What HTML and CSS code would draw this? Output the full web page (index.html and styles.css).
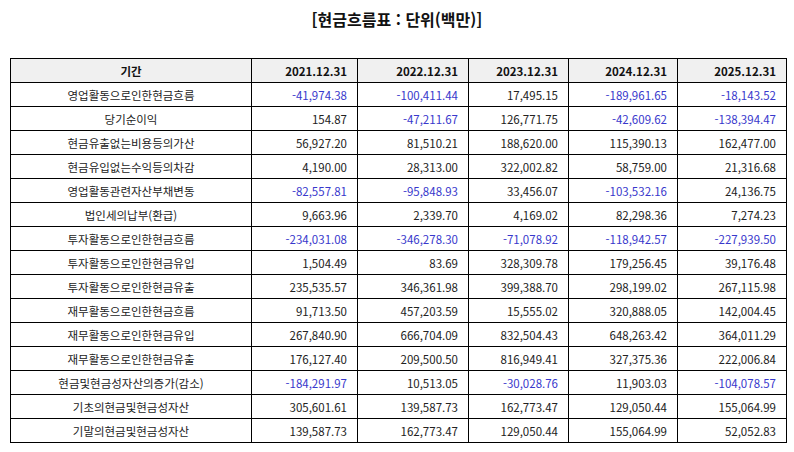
FILE: index.html
```html
<!DOCTYPE html>
<html lang="ko">
<head>
<meta charset="utf-8">
<title>현금흐름표</title>
<link rel="stylesheet" href="styles.css">
</head>
<body>
<h1 class="title">[현금흐름표 : 단위(백만)]</h1>
<table class="cf">
<colgroup>
<col class="c-label"><col class="c-a"><col class="c-b"><col class="c-c"><col class="c-d"><col class="c-e">
</colgroup>
<thead>
<tr><th class="lbl">기간</th><th>2021.12.31</th><th>2022.12.31</th><th>2023.12.31</th><th>2024.12.31</th><th>2025.12.31</th></tr>
</thead>
<tbody>
<tr><td class="lbl">영업활동으로인한현금흐름</td><td class="neg">-41,974.38</td><td class="neg">-100,411.44</td><td>17,495.15</td><td class="neg">-189,961.65</td><td class="neg">-18,143.52</td></tr>
<tr><td class="lbl">당기순이익</td><td>154.87</td><td class="neg">-47,211.67</td><td>126,771.75</td><td class="neg">-42,609.62</td><td class="neg">-138,394.47</td></tr>
<tr><td class="lbl">현금유출없는비용등의가산</td><td>56,927.20</td><td>81,510.21</td><td>188,620.00</td><td>115,390.13</td><td>162,477.00</td></tr>
<tr><td class="lbl">현금유입없는수익등의차감</td><td>4,190.00</td><td>28,313.00</td><td>322,002.82</td><td>58,759.00</td><td>21,316.68</td></tr>
<tr><td class="lbl">영업활동관련자산부채변동</td><td class="neg">-82,557.81</td><td class="neg">-95,848.93</td><td>33,456.07</td><td class="neg">-103,532.16</td><td>24,136.75</td></tr>
<tr><td class="lbl">법인세의납부(환급)</td><td>9,663.96</td><td>2,339.70</td><td>4,169.02</td><td>82,298.36</td><td>7,274.23</td></tr>
<tr><td class="lbl">투자활동으로인한현금흐름</td><td class="neg">-234,031.08</td><td class="neg">-346,278.30</td><td class="neg">-71,078.92</td><td class="neg">-118,942.57</td><td class="neg">-227,939.50</td></tr>
<tr><td class="lbl">투자활동으로인한현금유입</td><td>1,504.49</td><td>83.69</td><td>328,309.78</td><td>179,256.45</td><td>39,176.48</td></tr>
<tr><td class="lbl">투자활동으로인한현금유출</td><td>235,535.57</td><td>346,361.98</td><td>399,388.70</td><td>298,199.02</td><td>267,115.98</td></tr>
<tr><td class="lbl">재무활동으로인한현금흐름</td><td>91,713.50</td><td>457,203.59</td><td>15,555.02</td><td>320,888.05</td><td>142,004.45</td></tr>
<tr><td class="lbl">재무활동으로인한현금유입</td><td>267,840.90</td><td>666,704.09</td><td>832,504.43</td><td>648,263.42</td><td>364,011.29</td></tr>
<tr><td class="lbl">재무활동으로인한현금유출</td><td>176,127.40</td><td>209,500.50</td><td>816,949.41</td><td>327,375.36</td><td>222,006.84</td></tr>
<tr><td class="lbl">현금및현금성자산의증가(감소)</td><td class="neg">-184,291.97</td><td>10,513.05</td><td class="neg">-30,028.76</td><td>11,903.03</td><td class="neg">-104,078.57</td></tr>
<tr><td class="lbl">기초의현금및현금성자산</td><td>305,601.61</td><td>139,587.73</td><td>162,773.47</td><td>129,050.44</td><td>155,064.99</td></tr>
<tr><td class="lbl">기말의현금및현금성자산</td><td>139,587.73</td><td>162,773.47</td><td>129,050.44</td><td>155,064.99</td><td>52,052.83</td></tr>
</tbody>
</table>
</body>
</html>
```

FILE: styles.css
```css
html, body {
  margin: 0;
  padding: 0;
  background: #fff;
}
body {
  font-family: "Noto Sans CJK KR", "Noto Sans", sans-serif;
  color: #222;
}
.title {
  margin: 0;
  padding-top: 8px;
  height: 22px;
  line-height: 22px;
  font-size: 16px;
  font-weight: bold;
  text-align: center;
  color: #111;
  margin-bottom: 28px;
}
.cf {
  border-collapse: collapse;
  table-layout: fixed;
  width: 776px;
  margin-left: 10px;
  font-size: 11.5px;
  border: 1.5px solid #000;
}
.c-label { width: 241px; }
.c-a { width: 106px; }
.c-b { width: 111px; }
.c-c { width: 100px; }
.c-d { width: 109px; }
.c-e { width: 109px; }
.cf th, .cf td {
  border: 1px solid #000;
  height: 24px;
  padding: 0 10px 0 0;
  text-align: right;
  white-space: nowrap;
  box-sizing: border-box;
  line-height: 14px;
}
.cf th {
  background: #f0f0f0;
  font-weight: bold;
  color: #111;
}
.cf .lbl {
  text-align: center;
  padding: 0;
}
.cf td.neg {
  color: #3838cc;
}
```
